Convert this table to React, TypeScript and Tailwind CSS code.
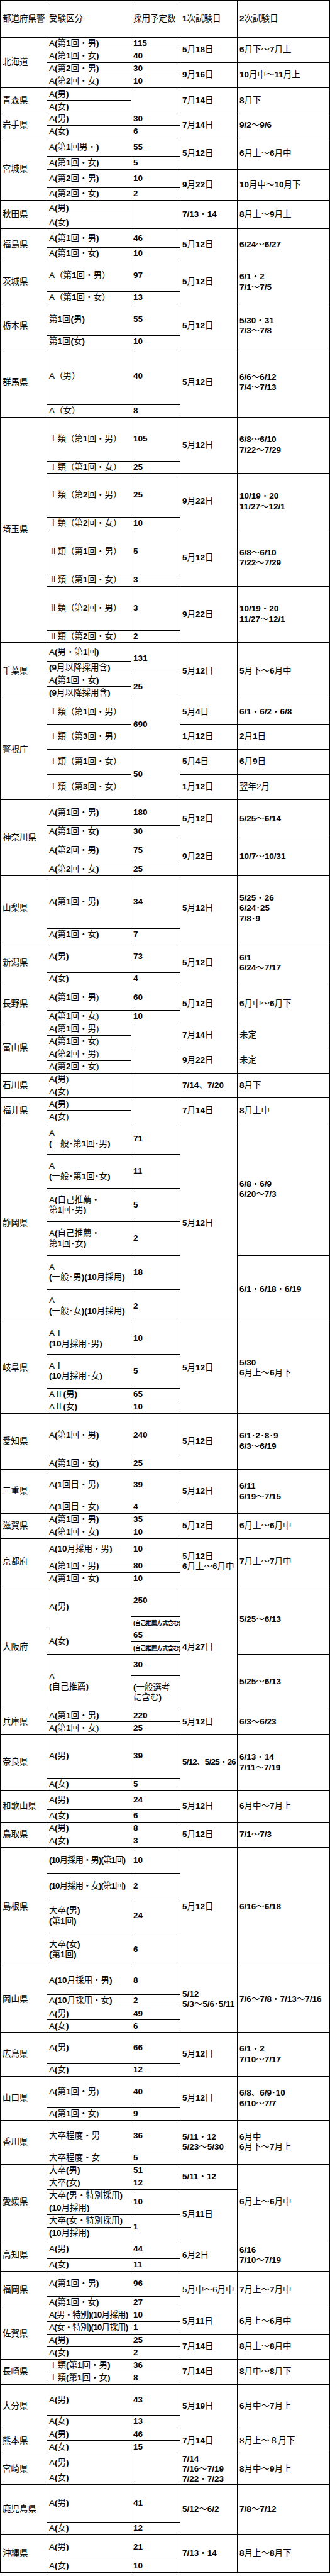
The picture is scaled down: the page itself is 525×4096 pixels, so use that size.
import { Fragment } from "react";

// cell: text | [text, rowSpan, extra]
// text: ascii digits & brackets render bold, "{..}" forces regular, "\n" = line break
type Cell = string | [string, number, string?];
type Row = [string, ...Cell[]];

const T = "tracking-[-0.8px]";
const S = "small";

const rows: Row[] = [
  ["h-[59.2px]", "都道府県警", "受験区分", "採用予定数", "1次試験日", "2次試験日"],
  // 北海道
  ["h-[20px]", ["北海道", 4], "A(第1回・男)", "115", ["5月18日", 2], ["6月下～7月上", 2]],
  ["h-[20px]", "A(第1回・女)", "40"],
  ["h-[20px]", "A(第2回・男)", "30", ["9月16日", 2], ["10月中～11月上", 2]],
  ["h-[20px]", "A(第2回・女)", "10"],
  // 青森
  ["h-[20.2px]", ["青森県", 2], "A(男)", ["", 2], ["7月14日", 2], ["8月下", 2]],
  ["h-[20px]", "A(女)"],
  // 岩手
  ["h-[19.6px]", ["岩手県", 2], "A(男)", "30", ["7月14日", 2], ["9/2～9/6", 2]],
  ["h-[20px]", "A(女)", "6"],
  // 宮城
  ["h-[29.1px]", ["宮城県", 4], "A(第1回男・)", "55", ["5月12日", 2], ["6月上～6月中", 2]],
  ["h-[20.5px]", "A(第1回・女)", "5"],
  ["h-[29.6px]", "A(第2回・男)", "10", ["9月22日", 2], ["10月中～10月下", 2]],
  ["h-[20px]", "A(第2回・女)", "2"],
  // 秋田
  ["h-[25.1px]", ["秋田県", 2], "A(男)", ["", 2], ["7/13・14", 2], ["8月上～9月上", 2]],
  ["h-[20.2px]", "A(女)"],
  // 福島
  ["h-[29.8px]", ["福島県", 2], "A(第1回・男)", "46", ["5月12日", 2], ["6/24～6/27", 2]],
  ["h-[20px]", "A(第1回・女)", "10"],
  // 茨城
  ["h-[49.6px]", ["茨城県", 2], "A（第1回・男）", "97", ["5月12日", 2], ["6/1・2\n7/1～7/5", 2]],
  ["h-[20.2px]", "A（第1回・女）", "13"],
  // 栃木
  ["h-[49.6px]", ["栃木県", 2], "第1回(男)", "55", ["5月12日", 2], ["5/30・31\n7/3～7/8", 2]],
  ["h-[20px]", "第1回(女)", "10"],
  // 群馬
  ["h-[90.3px]", ["群馬県", 2], "A（男）", "40", ["5月12日", 2], ["6/6～6/12\n7/4～7/13", 2]],
  ["h-[19.6px]", "A（女）", "8"],
  // 埼玉
  ["h-[70px]", ["埼玉県", 8], "Ⅰ類（第1回・男）", "105", ["5月12日", 2], ["6/8～6/10\n7/22～7/29", 2]],
  ["h-[19.8px]", "Ⅰ類（第1回・女）", "25"],
  ["h-[69.6px]", "Ⅰ類（第2回・男）", "25", ["9月22日", 2], ["10/19・20\n11/27～12/1", 2]],
  ["h-[20.2px]", "Ⅰ類（第2回・女）", "10"],
  ["h-[69.6px]", "Ⅱ類（第1回・男）", "5", ["5月12日", 2], ["6/8～6/10\n7/22～7/29", 2]],
  ["h-[20px]", "Ⅱ類（第1回・女）", "3"],
  ["h-[70px]", "Ⅱ類（第2回・男）", "3", ["9月22日", 2], ["10/19・20\n11/27～12/1", 2]],
  ["h-[19.6px]", "Ⅱ類（第2回・女）", "2"],
  // 千葉
  ["h-[30px]", ["千葉県", 4], "A(男・第1回)", ["131", 2], ["5月12日", 4], ["5月下～6月中", 4]],
  ["h-[20px]", "(9月以降採用含)"],
  ["h-[20.2px]", "A(第1回・女)", ["25", 2]],
  ["h-[20px]", "(9月以降採用含)"],
  // 警視庁
  ["h-[39.9px]", ["警視庁", 4], "Ⅰ類（第1回・男）", ["690", 2], "5月4日", "6/1・6/2・6/8"],
  ["h-[39.8px]", "Ⅰ類（第3回・男）", "1月12日", "2月1日"],
  ["h-[40.2px]", "Ⅰ類（第1回・女）", ["50", 2], "5月4日", "6月9日"],
  ["h-[39.8px]", "Ⅰ類（第3回・女）", "1月12日", "翌年{2}月"],
  // 神奈川
  ["h-[40.4px]", ["神奈川県", 4], "A(第1回・男)", "180", ["5月12日", 2], ["5/25～6/14", 2]],
  ["h-[20px]", "A(第1回・女)", "30"],
  ["h-[40.1px]", "A(第2回・男)", "75", ["9月22日", 2], ["10/7～10/31", 2]],
  ["h-[20px]", "A(第2回・女)", "25"],
  // 山梨
  ["h-[84.8px]", ["山梨県", 2], "A(第1回・男)", "34", ["5月12日", 2], ["5/25・26\n6/24･25\n7/8･9", 2]],
  ["h-[19.6px]", "A(第1回・女)", "7"],
  // 新潟
  ["h-[49.6px]", ["新潟県", 2], "A(男)", "73", ["5月12日", 2], ["6/1\n6/24～7/17", 2]],
  ["h-[20.2px]", "A(女)", "4"],
  // 長野
  ["h-[40px]", ["長野県", 2], "A(第1回・男{)}", "60", ["5月12日", 2], ["6月中～6月下", 2]],
  ["h-[20.3px]", "A(第1回・女{)}", "10"],
  // 富山
  ["h-[20px]", ["富山県", 4], "A(第1回・男{)}", ["", 2], ["7月14日", 2], ["未定", 2]],
  ["h-[20px]", "A(第1回・女{)}"],
  ["h-[20px]", "A(第2回・男{)}", ["", 2], ["9月22日", 2], ["未定", 2]],
  ["h-[20px]", "A(第2回・女{)}"],
  // 石川
  ["h-[19.4px]", ["石川県", 2], "A(男{)}", ["", 2], ["7/14、7/20", 2], ["8月下", 2]],
  ["h-[20px]", "A(女{)}"],
  // 福井
  ["h-[20px]", ["福井県", 2], "A(男{)}", ["", 2], ["7月14日", 2], ["8月上中", 2]],
  ["h-[20px]", "A(女{)}"],
  // 静岡
  ["h-[50px]", ["静岡県", 6], "A\n(一般･第1回･男)", "71", ["5月12日", 6], ["6/8・6/9\n6/20～7/3", 4]],
  ["h-[53.3px]", "A\n(一般･第1回･女)", "11"],
  ["h-[53.7px]", "A(自己推薦・\n第1回･男)", "5"],
  ["h-[53.5px]", "A(自己推薦・\n第1回･女)", "2"],
  ["h-[53.7px]", "A\n(一般･男)(10月採用)", "18", ["6/1・6/18・6/19", 2]],
  ["h-[53.6px]", "A\n(一般･女)(10月採用)", "2"],
  // 岐阜
  ["h-[49.8px]", ["岐阜県", 4], "AⅠ\n(10月採用･男)", "10", ["5月12日", 4], ["5/30\n6月上～6月下", 4]],
  ["h-[53.5px]", "AⅠ\n(10月採用･女)", "5"],
  ["h-[20px]", "AⅡ(男)", "65"],
  ["h-[20px]", "AⅡ(女)", "10"],
  // 愛知
  ["h-[69.8px]", ["愛知県", 2], "A(第1回・男)", "240", ["5月12日", 2], ["6/1･2･8･9\n6/3～6/19", 2]],
  ["h-[20px]", "A(第1回・女)", "25"],
  // 三重
  ["h-[49.6px]", ["三重県", 2], "A(1回目・男{)}", "39", ["5月12日", 2], ["6/11\n6/19～7/15", 2]],
  ["h-[20.2px]", "A(1回目・女{)}", "4"],
  // 滋賀
  ["h-[20px]", ["滋賀県", 2], "A(第1回・男)", "35", ["5月12日", 2], ["6月上～6月中", 2]],
  ["h-[20px]", "A(第1回・女)", "10"],
  // 京都
  ["h-[33.7px]", ["京都府", 3], "A(10月採用・男)", "10", ["{5}月12日\n6月上～{6}月中", 3], ["7月上～7月中", 3]],
  ["h-[20px]", "A(第1回・男)", "80"],
  ["h-[19.8px]", "A(第1回・女)", "10"],
  // 大阪
  ["h-[50.5px]", ["大阪府", 6], ["A(男)", 2], "250", ["4月27日", 6], ["5/25～6/13", 4]],
  ["h-[20px]", ["(自己推薦方式含む)", 1, S]],
  ["h-[20px]", ["A(女)", 2], "65"],
  ["h-[20px]", ["(自己推薦方式含む)", 1, S]],
  ["h-[33.7px]", ["A\n(自己推薦)", 2], "30", ["5/25～6/13", 2]],
  ["h-[53.7px]", "(一般選考\nに含む)"],
  // 兵庫
  ["h-[19.8px]", ["兵庫県", 2], "A(第1回・男)", "220", ["5月12日", 2], ["6/3～6/23", 2]],
  ["h-[20px]", "A(第1回・女{)}", "25"],
  // 奈良
  ["h-[69.6px]", ["奈良県", 2], "A(男)", "39", ["5/12、5/25・26", 2, T], ["6/13・14\n7/11～7/19", 2]],
  ["h-[20px]", "A(女)", "5"],
  // 和歌山
  ["h-[30px]", ["和歌山県", 2], "A(男)", "24", ["5月12日", 2], ["6月中～7月上", 2]],
  ["h-[20px]", "A(女)", "6"],
  // 鳥取
  ["h-[19.8px]", ["鳥取県", 2], "A(男)", "8", ["5月12日", 2], ["7/1～7/3", 2]],
  ["h-[20.2px]", "A(女)", "3"],
  // 島根
  ["h-[41.1px]", ["島根県", 4], ["(10月採用・男)(第1回)", 1, "tracking-[-1px]"], "10", ["5月12日", 4], ["6/16～6/18", 4]],
  ["h-[41.3px]", ["(10月採用・女)(第1回)", 1, "tracking-[-1px]"], "2"],
  ["h-[53.6px]", "大卒(男)\n(第1回)", "24"],
  ["h-[53.9px]", "大卒(女)\n(第1回)", "6"],
  // 岡山
  ["h-[44.4px]", ["岡山県", 4], "A(10月採用・男)", "8", ["5/12\n5/3～5/6･5/11", 4], ["7/6～7/8・7/13～7/16", 4]],
  ["h-[20px]", "A(10月採用・女)", "2"],
  ["h-[20.3px]", "A(男)", "49"],
  ["h-[19.8px]", "A(女)", "6"],
  // 広島
  ["h-[50px]", ["広島県", 2], "A(男)", "66", ["5月12日", 2], ["6/1・2\n7/10～7/17", 2]],
  ["h-[20px]", "A(女)", "12"],
  // 山口
  ["h-[49.8px]", ["山口県", 2], "A(第1回・男{)}", "40", ["5月12日", 2], ["6/8、6/9･10\n6/10～7/7", 2]],
  ["h-[20px]", "A(第1回・女{)}", "9"],
  // 香川
  ["h-[49.4px]", ["香川県", 2], "大卒程度・男", "36", ["5/11・12\n5/23～5/30", 2], ["6月中\n6月下～7月上", 2]],
  ["h-[20.2px]", "大卒程度・女", "5"],
  // 愛媛
  ["h-[20.2px]", ["愛媛県", 6], "大卒(男)", "51", ["5/11・12", 2], ["6月上～6月中", 6]],
  ["h-[20px]", "大卒(女)", "12"],
  ["h-[20px]", "大卒(男・特別採用)", ["10", 2], ["5月11日", 4]],
  ["h-[20px]", "(10月採用)"],
  ["h-[20px]", "大卒(女・特別採用)", ["1", 2]],
  ["h-[20px]", "(10月採用)"],
  // 高知
  ["h-[29.8px]", ["高知県", 2], "A(男)", "44", ["6月2日", 2], ["6/16\n7/10～7/19", 2]],
  ["h-[20px]", "A(女)", "11"],
  // 福岡
  ["h-[40.1px]", ["福岡県", 2], "A(第1回・男)", "96", ["{5}月中～{6}月中", 2], ["7月上～7月中", 2]],
  ["h-[20px]", "A(第1回・女)", "27"],
  // 佐賀
  ["h-[20px]", ["佐賀県", 4], ["A(男・特別)(10月採用)", 1, T], "10", ["5月11日", 2], ["6月上～6月中", 2]],
  ["h-[20px]", ["A(女・特別)(10月採用)", 1, T], "1"],
  ["h-[20px]", "A(男)", "25", ["7月14日", 2], ["8月上～8月中", 2]],
  ["h-[20.2px]", "A(女)", "2"],
  // 長崎
  ["h-[20px]", ["長崎県", 2], "Ⅰ類(第1回・男)", "36", ["7月14日", 2], ["8月中～8月下", 2]],
  ["h-[19.8px]", "Ⅰ類(第1回・女)", "8"],
  // 大分
  ["h-[49.6px]", ["大分県", 2], "A(男)", "43", ["5月19日", 2], ["6月中～7月上", 2]],
  ["h-[20px]", "A(女)", "13"],
  // 熊本
  ["h-[20.2px]", ["熊本県", 2], "A(男)", "46", ["7月14日", 2], ["{8}月上～８月下", 2]],
  ["h-[20px]", "A(女)", "15"],
  // 宮崎
  ["h-[29.8px]", ["宮崎県", 2], "A(男)", ["", 2], ["7/14\n7/16～7/19\n7/22・7/23", 2, "leading-[16px]"], ["8月中～9月上", 2]],
  ["h-[20px]", "A(女)"],
  // 鹿児島
  ["h-[59.8px]", ["鹿児島県", 2], "A(男)", "41", ["5/12～6/2", 2], ["7/8～7/12", 2]],
  ["h-[20px]", "A(女)", "12"],
  // 沖縄
  ["h-[40.2px]", ["沖縄県", 2], "A(男)", "21", ["7/13・14", 2], ["8月上～8月下", 2]],
  ["h-[20px]", "A(女)", "10"],
];

const Line = ({ line }: { line: string }) => {
  const runs: { t: string; b: boolean }[] = [];
  let plain = false;
  for (const ch of line) {
    if (ch === "{") { plain = true; continue; }
    if (ch === "}") { plain = false; continue; }
    const b = !plain && /[0-9()\/.,]/.test(ch);
    const last = runs[runs.length - 1];
    if (last && last.b === b) last.t += ch;
    else runs.push({ t: ch, b });
  }
  return (
    <>
      {runs.map((r, i) => (
        <span key={i} className={r.b ? "font-bold" : "font-normal"}>{r.t}</span>
      ))}
    </>
  );
};

const Rich = ({ text }: { text: string }) => (
  <>
    {text.split("\n").map((l, i) => (
      <Fragment key={i}>
        {i > 0 && <br />}
        <Line line={l} />
      </Fragment>
    ))}
  </>
);

const App = () => {
  return (
    <div className="bg-white w-[525px]">
      <table className="table-fixed border-collapse w-[524px] text-[13.5px] leading-[16.5px] text-black font-['Liberation_Sans','Noto_Sans_CJK_JP',sans-serif]">
        <colgroup>
          <col className="w-[74px]" />
          <col className="w-[134px]" />
          <col className="w-[78px]" />
          <col className="w-[91px]" />
          <col className="w-[147px]" />
        </colgroup>
        <tbody>
          {rows.map(([h, ...cells], ri) => (
            <tr key={ri} className={h}>
              {cells.map((c, ci) => {
                const [text, span, extra] = typeof c === "string" ? [c, 1, ""] : [c[0], c[1], c[2] ?? ""];
                const small = extra === S;
                return (
                  <td
                    key={ci}
                    rowSpan={span}
                    className={`border border-black p-0 pl-[3px] align-middle whitespace-nowrap ${small ? "" : extra}`}
                  >
                    {small ? (
                      <span className="text-[9px] font-bold tracking-[-0.3px]">{text}</span>
                    ) : (
                      <Rich text={text} />
                    )}
                  </td>
                );
              })}
            </tr>
          ))}
        </tbody>
      </table>
    </div>
  );
};

export default App;
